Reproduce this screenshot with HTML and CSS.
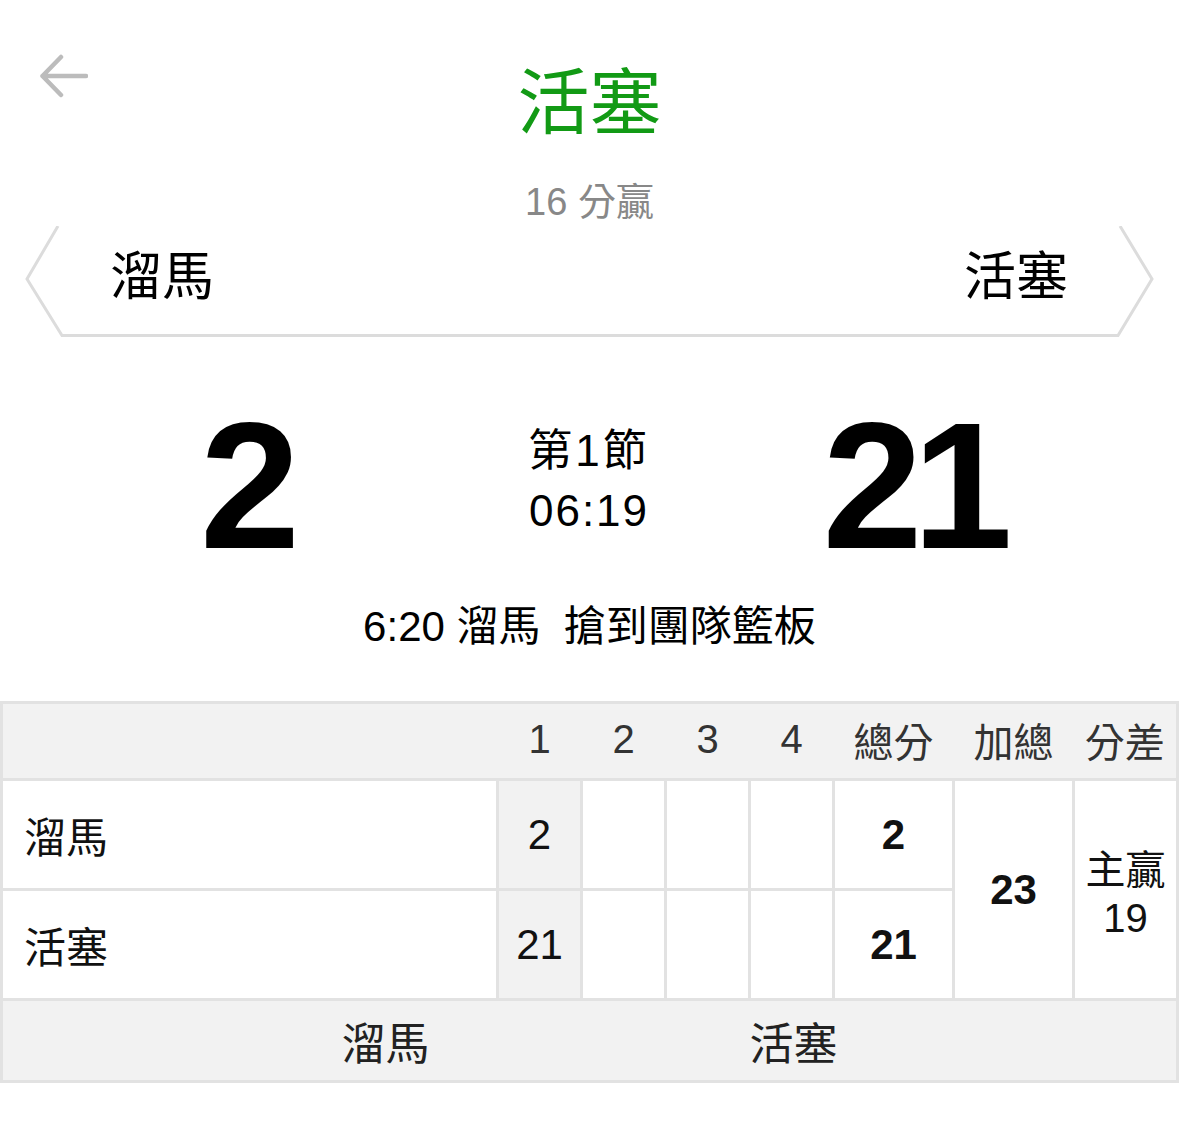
FILE: index.html
```html
<!DOCTYPE html>
<html lang="zh-Hant">
<head>
<meta charset="utf-8">
<title>活塞</title>
<link rel="stylesheet" href="styles.css">
</head>
<body>
<div class="page">
  <header class="topbar">
    <div class="back" aria-label="返回">
      <svg viewBox="0 0 48 48" width="48" height="48"><path d="M21 3 L2.5 22 L21 41 M2.5 22 H46"/></svg>
    </div>
    <h1 class="title">活塞</h1>
    <div class="subtitle">16 分贏</div>
  </header>

  <section class="banner">
    <svg class="banner-frame" viewBox="0 0 1179 112" width="1179" height="112"><polyline points="58,0 27,53 62,109.5 1118,109.5 1152,53 1120,0"/></svg>
    <span class="team-name">溜馬</span>
    <span class="team-name">活塞</span>
  </section>

  <section class="scoreboard">
    <div class="score">2</div>
    <div class="clock">
      <div class="period">第1節</div>
      <div class="time">06:19</div>
    </div>
    <div class="score score-away">21</div>
  </section>

  <p class="event">6:20 溜馬  搶到團隊籃板</p>

  <table class="linescore">
    <colgroup>
      <col class="c-team"><col class="c-q"><col class="c-q"><col class="c-q"><col class="c-q"><col class="c-total"><col class="c-sum"><col class="c-diff">
    </colgroup>
    <thead>
      <tr><th class="first"></th><th>1</th><th>2</th><th>3</th><th>4</th><th>總分</th><th>加總</th><th class="last">分差</th></tr>
    </thead>
    <tbody>
      <tr>
        <td class="team">溜馬</td><td class="q cur">2</td><td class="q"></td><td class="q"></td><td class="q"></td><td class="total">2</td>
        <td class="sum" rowspan="2">23</td>
        <td class="diff" rowspan="2"><div>主贏</div><div class="diff-num">19</div></td>
      </tr>
      <tr>
        <td class="team">活塞</td><td class="q cur">21</td><td class="q"></td><td class="q"></td><td class="q"></td><td class="total">21</td>
      </tr>
    </tbody>
    <tfoot>
      <tr><td colspan="8" class="foot"><div class="legend"><span>溜馬</span><span>活塞</span></div></td></tr>
    </tfoot>
  </table>
</div>
</body>
</html>
```

FILE: styles.css
```css
* { box-sizing: border-box; }
html, body { margin: 0; padding: 0; background: #fff; }
body {
  font-family: "Liberation Sans", "Noto Sans CJK TC", sans-serif;
  color: #000;
}
.page { width: 1179px; }

.topbar {
  display: grid;
  grid-template-columns: 1fr auto 1fr;
  padding-top: 50px;
}
.back {
  grid-column: 1;
  grid-row: 1;
  margin: 4px 0 0 40px;
  width: 48px;
  height: 48px;
}
.back svg { display: block; }
.back path {
  fill: none;
  stroke: #bcbcbc;
  stroke-width: 4.5;
  stroke-linecap: round;
  stroke-linejoin: round;
}
.title {
  grid-column: 2;
  grid-row: 1;
  margin: 13px 0 0;
  font-size: 72px;
  line-height: 80px;
  font-weight: 400;
  color: #129a15;
}
.subtitle {
  grid-column: 1 / 4;
  grid-row: 2;
  text-align: center;
  font-size: 38px;
  line-height: 44px;
  color: #888;
  margin-top: 37px;
}

.banner {
  position: relative;
  height: 112px;
  margin-top: 2px;
  display: flex;
  justify-content: space-between;
  align-items: center;
  padding: 0 111px 10px 110px;
}
.banner-frame {
  position: absolute;
  left: 0;
  top: 0;
}
.banner-frame polyline {
  fill: none;
  stroke: #dcdcdc;
  stroke-width: 3;
}
.team-name {
  position: relative;
  font-size: 52px;
  line-height: 60px;
}

.scoreboard {
  display: grid;
  grid-template-columns: 500px 178px 1fr;
  align-items: center;
  margin-top: 58px;
}
.score {
  font-size: 180px;
  line-height: 180px;
  font-weight: 700;
  text-align: center;
}
.score-away {
  padding-right: 32px;
  letter-spacing: -10px;
}
.clock {
  text-align: center;
  font-size: 44px;
  line-height: 60px;
  padding-bottom: 10px;
}
.period { letter-spacing: 3px; }
.time { letter-spacing: 2px; }

.event {
  margin: 26px 0 0;
  text-align: center;
  font-size: 42px;
  line-height: 50px;
  white-space: pre;
}

.linescore {
  margin-top: 49px;
  width: 1179px;
  border-collapse: collapse;
  table-layout: fixed;
}
.c-team { width: 496px; }
.c-q { width: 84px; }
.c-total { width: 120px; }
.c-sum { width: 120px; }

.linescore th {
  height: 77px;
  padding: 0 0 3px;
  background: #f2f2f2;
  border-top: 3px solid #e2e2e2;
  border-bottom: 3px solid #e2e2e2;
  font-size: 40px;
  font-weight: 400;
  color: #333;
  text-align: center;
  vertical-align: middle;
}
.linescore th.first { border-left: 3px solid #e2e2e2; }
.linescore th.last { border-right: 3px solid #e2e2e2; }

.linescore td {
  height: 110px;
  padding: 0;
  border: 3px solid #e2e2e2;
  font-size: 42px;
  text-align: center;
  vertical-align: middle;
  color: #111;
}
.linescore td.team {
  text-align: left;
  padding-left: 21px;
}
.linescore td.cur { background: #f2f2f2; }
.linescore td.total,
.linescore td.sum { font-weight: 700; }
.linescore td.diff {
  font-size: 40px;
  line-height: 48px;
  padding-top: 8px;
}

.linescore td.foot {
  height: 82px;
  background: #f2f2f2;
  font-size: 44px;
  color: #222;
}
.legend {
  display: flex;
  justify-content: center;
}
.legend span {
  width: 408px;
  text-align: center;
}
```
